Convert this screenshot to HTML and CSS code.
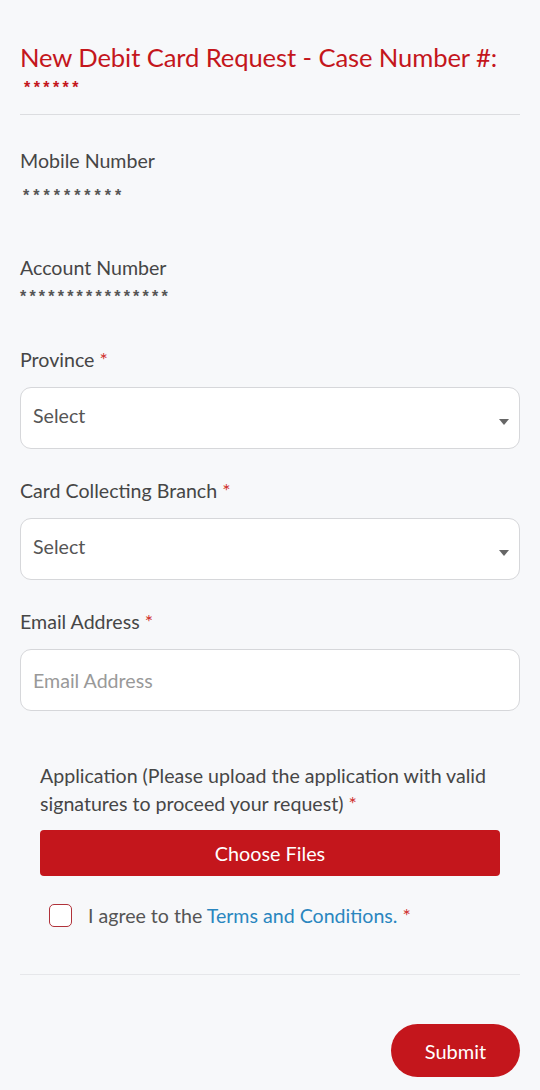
FILE: index.html
```html
<!DOCTYPE html>
<html>
<head>
<meta charset="utf-8">
<link rel="stylesheet" href="styles.css">
</head>
<body>
<div class="page">
  <h1 class="title">New Debit Card Request - Case Number #:</h1>
  <div class="case stars">******</div>
  <hr class="rule">
  <div class="field">
    <div class="label">Mobile Number</div>
    <div class="value stars v1">**********</div>
  </div>
  <div class="field">
    <div class="label">Account Number</div>
    <div class="value stars v2">****************</div>
  </div>
  <div class="group">
    <div class="label">Province <span class="req">*</span></div>
    <div class="box"><span>Select</span><span class="caret"></span></div>
  </div>
  <div class="group">
    <div class="label">Card Collecting Branch <span class="req">*</span></div>
    <div class="box"><span>Select</span><span class="caret"></span></div>
  </div>
  <div class="group">
    <div class="label">Email Address <span class="req">*</span></div>
    <div class="box"><span class="ph">Email Address</span></div>
  </div>
  <div class="upload">
    <div class="label multi">Application (Please upload the application with valid signatures to proceed your request) <span class="req">*</span></div>
    <div class="choose">Choose Files</div>
    <div class="agree">
      <span class="check"></span>
      <span>I agree to the <span class="link">Terms and Conditions.</span> <span class="req">*</span></span>
    </div>
  </div>
  <hr class="rule rule2">
  <div class="actions"><div class="submit">Submit</div></div>
</div>
</body>
</html>
```
FILE: styles.css
```css
html, body { margin: 0; padding: 0; }
body { background: #f7f8fa; font-family: Lato, "Noto Sans", sans-serif; color: #464646; }
.page { width: 500px; padding: 0 20px; }
.title { margin: 0; padding-top: 40px; font-weight: 400; font-size: 25.6px; line-height: 34px; color: #c4161c; letter-spacing: -0.1px; }
.stars { font-family: "Liberation Sans", Arial, sans-serif; font-weight: 700; }
.case { color: #c4161c; font-size: 16px; line-height: 20px; padding: 4px 0 0 4px; letter-spacing: 3.4px; }
.rule { border: 0; border-top: 1px solid #dcdde0; margin: 16px 0 0; }
.label { font-size: 19.6px; line-height: 26px; color: #464646; }
.rule + .field { padding-top: 33px; }
.value { font-size: 16px; line-height: 18px; color: #555; }
.v1 { padding-left: 3px; margin-top: 13px; height: 68px; letter-spacing: 4px; }
.v2 { margin-top: 7px; height: 54px; letter-spacing: 3.2px; }
.req { color: #d0312d; }
.group { margin-top: 5px; }
.group + .group { margin-top: 29px; }
.box { margin-top: 14px; background: #fff; border: 1px solid #d6d7da; border-radius: 11px; display: flex; align-items: center; justify-content: space-between; padding: 0 12px; box-sizing: border-box; height: 62px; font-size: 19.6px; color: #555; }
.box span:first-child { margin-top: -6px; }
.ph { color: #999; margin-top: 0 !important; }
.caret { width: 0; height: 0; border-left: 5px solid transparent; border-right: 5px solid transparent; border-top: 6px solid #666; margin-top: 8px; margin-right: -2px; }
.upload { padding: 51px 20px 0; }
.multi { line-height: 28px; }
.choose { margin-top: 12px; height: 46px; background: #c4161c; color: #fff; border-radius: 4px; display: flex; align-items: center; justify-content: center; font-size: 19.8px; }
.agree { margin-top: 28px; display: flex; align-items: center; gap: 16px; padding-left: 9px; font-size: 19.6px; color: #555; }
.check { width: 21px; height: 21px; border: 1.5px solid #b0323a; border-radius: 5px; background: #fff; flex: none; }
.link { color: #2a86bf; }
.rule2 { margin-top: 47px; border-top-color: #e6e7ea; }
.actions { display: flex; justify-content: flex-end; padding-top: 49px; }
.submit { width: 129px; height: 53px; border-radius: 27px; background: #c4161c; color: #fff; font-size: 20px; display: flex; align-items: center; justify-content: center; }
```
